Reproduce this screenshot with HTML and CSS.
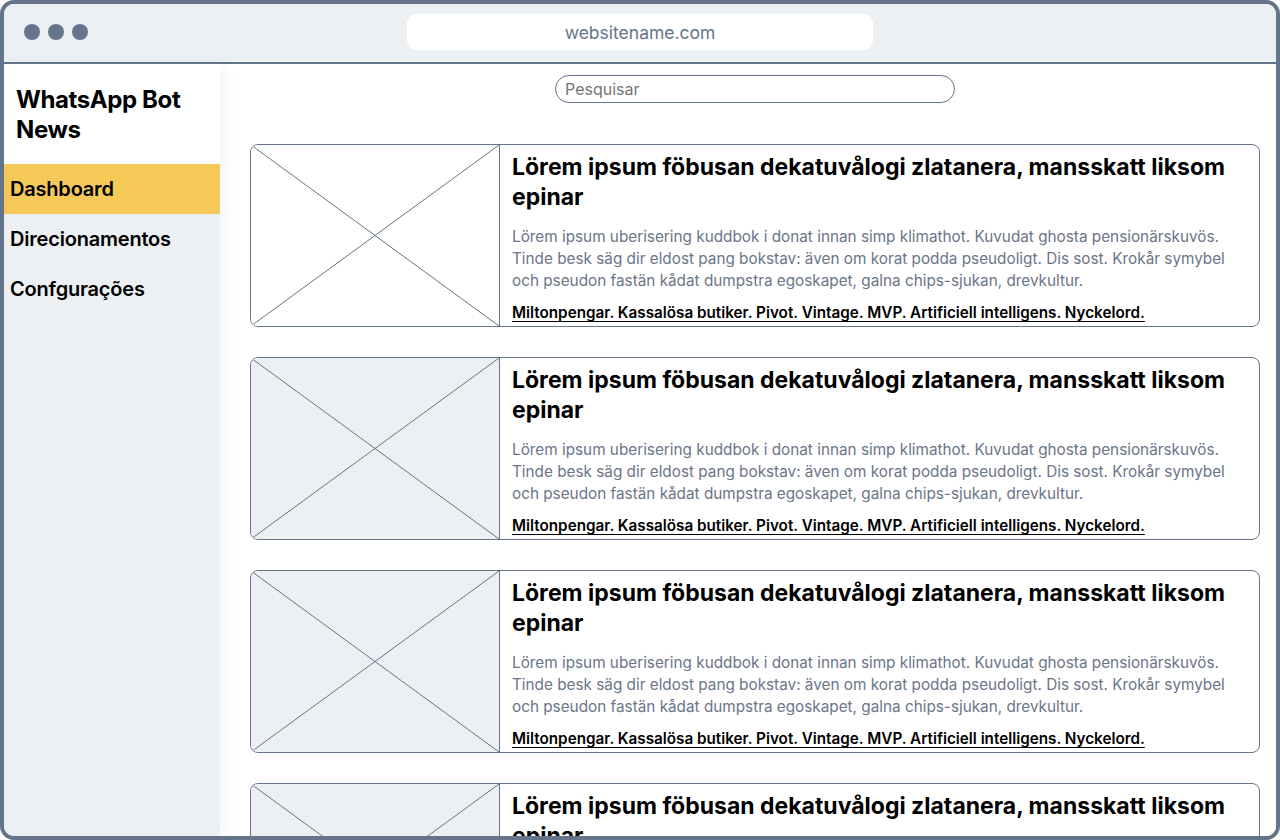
FILE: index.html
```html
<!DOCTYPE html>
<html lang="pt">
<head>
<meta charset="utf-8">
<title>WhatsApp Bot News</title>
<link rel="stylesheet" href="styles.css">
</head>
<body>
<div class="frame">
  <header class="topbar">
    <div class="dots"><span></span><span></span><span></span></div>
    <div class="url">websitename.com</div>
  </header>
  <div class="app">
    <aside class="sidebar">
      <h1 class="brand">WhatsApp Bot News</h1>
      <nav class="nav">
        <a class="nav-item active">Dashboard</a>
        <a class="nav-item">Direcionamentos</a>
        <a class="nav-item">Confgurações</a>
      </nav>
    </aside>
    <main class="main">
      <div class="search-row"><input class="search" type="text" placeholder="Pesquisar"></div>
      <div class="cards">
        <article class="card">
          <div class="thumb white"><svg viewBox="0 0 100 100" preserveAspectRatio="none"><line x1="0" y1="0" x2="100" y2="100" vector-effect="non-scaling-stroke"/><line x1="100" y1="0" x2="0" y2="100" vector-effect="non-scaling-stroke"/></svg></div>
          <div class="body">
            <h2 class="title">Lörem ipsum föbusan dekatuvålogi zlatanera, mansskatt liksom epinar</h2>
            <p class="desc">Lörem ipsum uberisering kuddbok i donat innan simp klimathot. Kuvudat ghosta pensionärskuvös. Tinde besk säg dir eldost pang bokstav: även om korat podda pseudoligt. Dis sost. Krokår symybel och pseudon fastän kådat dumpstra egoskapet, galna chips-sjukan, drevkultur.</p>
            <a class="tags">Miltonpengar. Kassalösa butiker. Pivot. Vintage. MVP. Artificiell intelligens. Nyckelord.</a>
          </div>
        </article>
        <article class="card">
          <div class="thumb"><svg viewBox="0 0 100 100" preserveAspectRatio="none"><line x1="0" y1="0" x2="100" y2="100" vector-effect="non-scaling-stroke"/><line x1="100" y1="0" x2="0" y2="100" vector-effect="non-scaling-stroke"/></svg></div>
          <div class="body">
            <h2 class="title">Lörem ipsum föbusan dekatuvålogi zlatanera, mansskatt liksom epinar</h2>
            <p class="desc">Lörem ipsum uberisering kuddbok i donat innan simp klimathot. Kuvudat ghosta pensionärskuvös. Tinde besk säg dir eldost pang bokstav: även om korat podda pseudoligt. Dis sost. Krokår symybel och pseudon fastän kådat dumpstra egoskapet, galna chips-sjukan, drevkultur.</p>
            <a class="tags">Miltonpengar. Kassalösa butiker. Pivot. Vintage. MVP. Artificiell intelligens. Nyckelord.</a>
          </div>
        </article>
        <article class="card">
          <div class="thumb"><svg viewBox="0 0 100 100" preserveAspectRatio="none"><line x1="0" y1="0" x2="100" y2="100" vector-effect="non-scaling-stroke"/><line x1="100" y1="0" x2="0" y2="100" vector-effect="non-scaling-stroke"/></svg></div>
          <div class="body">
            <h2 class="title">Lörem ipsum föbusan dekatuvålogi zlatanera, mansskatt liksom epinar</h2>
            <p class="desc">Lörem ipsum uberisering kuddbok i donat innan simp klimathot. Kuvudat ghosta pensionärskuvös. Tinde besk säg dir eldost pang bokstav: även om korat podda pseudoligt. Dis sost. Krokår symybel och pseudon fastän kådat dumpstra egoskapet, galna chips-sjukan, drevkultur.</p>
            <a class="tags">Miltonpengar. Kassalösa butiker. Pivot. Vintage. MVP. Artificiell intelligens. Nyckelord.</a>
          </div>
        </article>
        <article class="card">
          <div class="thumb"><svg viewBox="0 0 100 100" preserveAspectRatio="none"><line x1="0" y1="0" x2="100" y2="100" vector-effect="non-scaling-stroke"/><line x1="100" y1="0" x2="0" y2="100" vector-effect="non-scaling-stroke"/></svg></div>
          <div class="body">
            <h2 class="title">Lörem ipsum föbusan dekatuvålogi zlatanera, mansskatt liksom epinar</h2>
            <p class="desc">Lörem ipsum uberisering kuddbok i donat innan simp klimathot. Kuvudat ghosta pensionärskuvös. Tinde besk säg dir eldost pang bokstav: även om korat podda pseudoligt. Dis sost. Krokår symybel och pseudon fastän kådat dumpstra egoskapet, galna chips-sjukan, drevkultur.</p>
            <a class="tags">Miltonpengar. Kassalösa butiker. Pivot. Vintage. MVP. Artificiell intelligens. Nyckelord.</a>
          </div>
        </article>
      </div>
    </main>
  </div>
</div>
</body>
</html>
```
FILE: styles.css
```css
* { box-sizing: border-box; }
html, body { margin: 0; padding: 0; }
body {
  font-family: Inter, "Noto Sans", sans-serif;
  background: #ffffff;
  color: #000;
}
.frame {
  width: 1280px;
  height: 840px;
  border: 4px solid #64748b;
  border-radius: 14px;
  overflow: hidden;
  display: flex;
  flex-direction: column;
}
.topbar {
  height: 60px;
  flex: none;
  background: #edf0f3;
  border-bottom: 2px solid #64748b;
  display: flex;
  align-items: flex-start;
  padding: 10px 0 0 20px;
}
.dots { display: flex; gap: 8px; margin-top: 10px; }
.dots span {
  width: 16px; height: 16px; border-radius: 50%;
  background: #64748b;
}
.url {
  margin-left: 319px;
  width: 466px;
  height: 36px;
  background: #fff;
  border-radius: 9px;
  display: flex;
  align-items: center;
  justify-content: center;
  font-size: 17.5px;
  color: #64748b;
}
.app { flex: 1; display: flex; min-height: 0; }
.sidebar {
  width: 216px;
  flex: none;
  background: #edf0f3;
  display: flex;
  flex-direction: column;
  box-shadow: 4px 0 12px rgba(100, 116, 139, 0.08);
  position: relative;
  z-index: 1;
}
.brand {
  margin: 0;
  background: #fff;
  height: 100px;
  padding: 21px 12px 0 12px;
  font-size: 24px;
  line-height: 30px;
  font-weight: 700;
  letter-spacing: -0.4px;
}
.nav { display: flex; flex-direction: column; }
.nav-item {
  height: 50px;
  display: flex;
  align-items: center;
  padding-left: 6px;
  font-size: 20px;
  font-weight: 600;
  color: #000;
  letter-spacing: -0.2px;
}
.nav-item.active { background: #f5c957; }
.main {
  flex: 1;
  background: #fff;
  padding: 11px 16px 0 30px;
  overflow: hidden;
}
.search-row { display: flex; justify-content: center; }
.search {
  width: 400px;
  height: 28px;
  border: 1px solid #64748b;
  border-radius: 14px;
  padding: 0 9px;
  font-family: inherit;
  font-size: 16px;
  outline: none;
}
.search::placeholder { color: #757575; }
.cards {
  margin-top: 41px;
  display: flex;
  flex-direction: column;
  gap: 30px;
}
.card {
  flex: none;
  height: 183px;
  border: 1px solid #64748b;
  border-radius: 8px;
  display: flex;
  overflow: hidden;
}
.thumb {
  width: 249px;
  flex: none;
  background: #edf0f3;
  border-right: 1px solid #64748b;
}
.thumb.white { background: #fff; }
.thumb svg { display: block; width: 100%; height: 100%; }
.thumb line { stroke: #64748b; stroke-width: 1; }
.body {
  flex: 1;
  padding: 7px 12px 0 12px;
  display: flex;
  flex-direction: column;
}
.title {
  margin: 0;
  font-size: 23px;
  line-height: 30px;
  font-weight: 700;
  letter-spacing: 0;
}
.desc {
  margin: 14px 0 0;
  font-size: 15.3px;
  line-height: 22px;
  color: #6b7588;
}
.tags {
  margin-top: 11px;
  font-size: 15.25px;
  line-height: 20px;
  font-weight: 600;
  color: #000;
  text-decoration: underline;
  text-decoration-thickness: 1px;
  text-underline-offset: 3px;
}
```
